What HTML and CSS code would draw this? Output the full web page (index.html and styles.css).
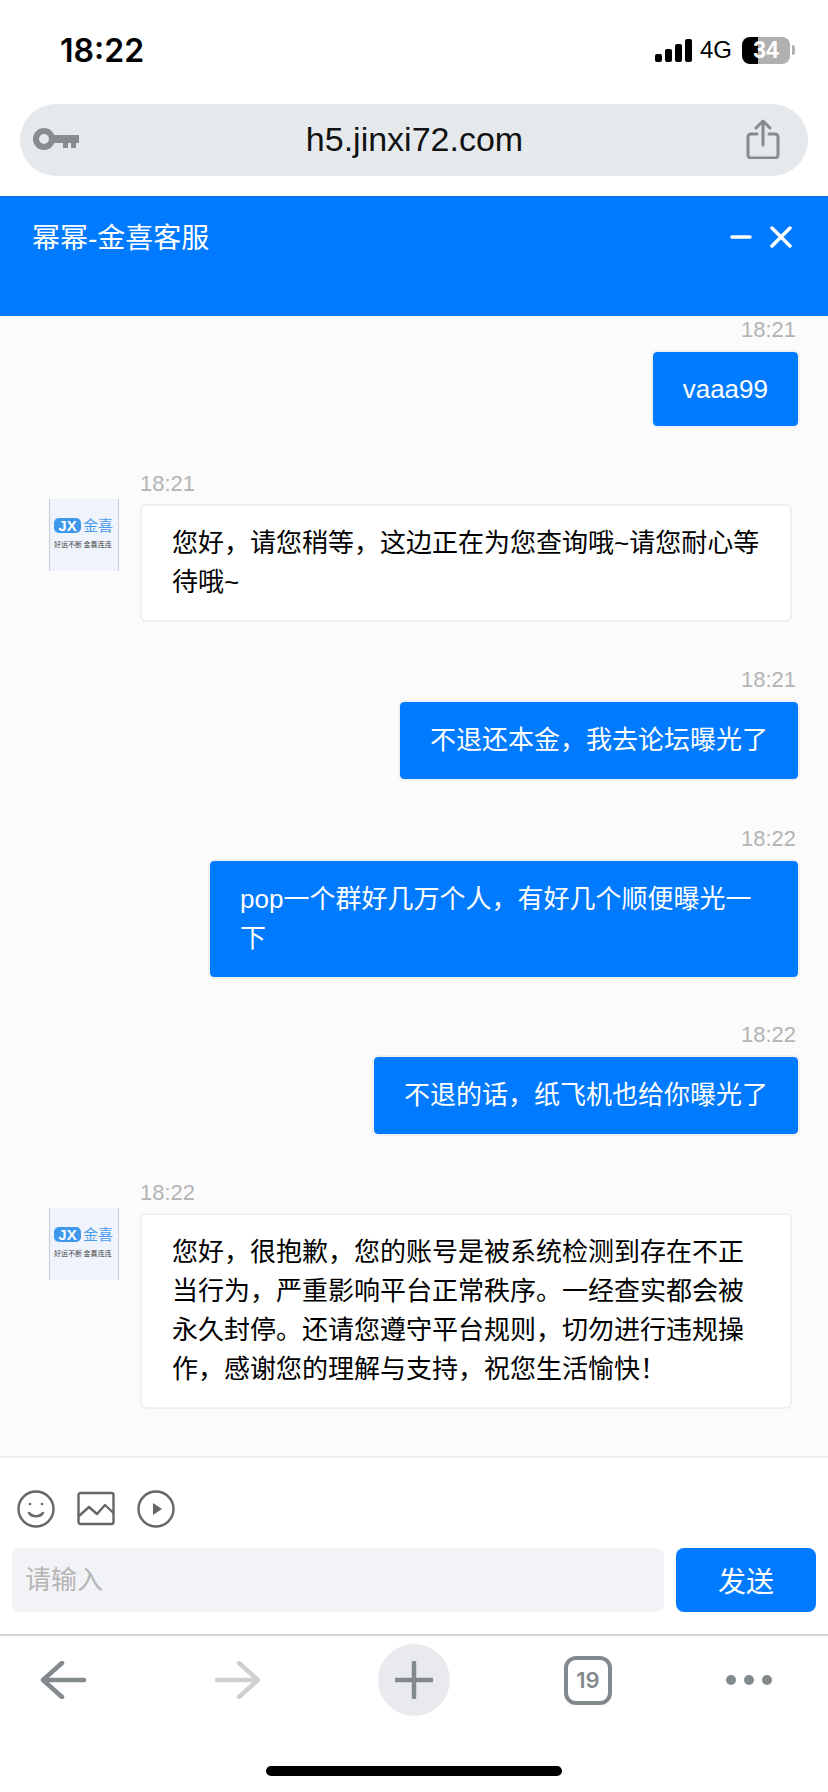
FILE: index.html
```html
<!DOCTYPE html>
<html lang="zh">
<head>
  <meta charset="UTF-8">
  <title>幂幂-金喜客服</title>
  <link rel="stylesheet" href="styles.css">
</head>
<body>
  <div class="status-bar">
    <span class="clock">18:22</span>
    <div class="status-icons">
      <div class="signal"><i></i><i></i><i></i><i></i></div>
      <span class="net">4G</span>
      <div class="battery">34</div>
      <div class="battery-nub"></div>
    </div>
  </div>

  <div class="url-bar">
    <svg class="key" width="46" height="22" viewBox="0 0 46 22">
      <circle cx="11" cy="11" r="8" fill="none" stroke="#868c90" stroke-width="6"/>
      <path d="M18 7h28v8h-3v5h-5v-5h-3v5h-5v-5H18z" fill="#868c90"/>
    </svg>
    <span class="url">h5.jinxi72.com</span>
    <svg class="share" width="34" height="40" viewBox="0 0 34 40" fill="none" stroke="#848b90" stroke-width="3" stroke-linecap="round" stroke-linejoin="round">
      <path d="M11 15H5a3 3 0 0 0-3 3v18a3 3 0 0 0 3 3h24a3 3 0 0 0 3-3V18a3 3 0 0 0-3-3h-6"/>
      <path d="M17 26V3M10 9l7-7 7 7"/>
    </svg>
  </div>

  <div class="chat-header">
    <span class="chat-title">幂幂-金喜客服</span>
    <div class="chat-actions">
      <svg width="22" height="22" viewBox="0 0 22 22"><path d="M2 11h18" stroke="#fff" stroke-width="3.500" stroke-linecap="round"/></svg>
      <svg width="22" height="22" viewBox="0 0 22 22"><path d="M2 2l18 18M20 2L2 20" stroke="#fff" stroke-width="3.500" stroke-linecap="round"/></svg>
    </div>
  </div>

  <div class="messages">
    <div class="msg msg-me first">
      <div class="msg-time">18:21</div>
      <div class="bubble latin">vaaa99</div>
    </div>

    <div class="msg msg-agent gap-sm">
      <div class="avatar">
        <div class="logo-row"><span class="logo-jx">JX</span><span class="logo-name">金喜</span></div>
        <div class="logo-slogan">好运不断 金喜连连</div>
      </div>
      <div class="msg-body">
        <div class="msg-time">18:21</div>
        <div class="bubble">您好，请您稍等，这边正在为您查询哦~请您耐心等待哦~</div>
      </div>
    </div>

    <div class="msg msg-me">
      <div class="msg-time">18:21</div>
      <div class="bubble">不退还本金，我去论坛曝光了</div>
    </div>

    <div class="msg msg-me">
      <div class="msg-time">18:22</div>
      <div class="bubble">pop一个群好几万个人，有好几个顺便曝光一下</div>
    </div>

    <div class="msg msg-me gap-sm">
      <div class="msg-time">18:22</div>
      <div class="bubble">不退的话，纸飞机也给你曝光了</div>
    </div>

    <div class="msg msg-agent">
      <div class="avatar">
        <div class="logo-row"><span class="logo-jx">JX</span><span class="logo-name">金喜</span></div>
        <div class="logo-slogan">好运不断 金喜连连</div>
      </div>
      <div class="msg-body">
        <div class="msg-time">18:22</div>
        <div class="bubble">您好，很抱歉，您的账号是被系统检测到存在不正当行为，严重影响平台正常秩序。一经查实都会被永久封停。还请您遵守平台规则，切勿进行违规操作，感谢您的理解与支持，祝您生活愉快！</div>
      </div>
    </div>
  </div>

  <div class="composer">
    <div class="composer-tools">
      <svg width="38" height="38" viewBox="0 0 38 38" fill="none" stroke="#666" stroke-width="2.400" stroke-linecap="round">
        <circle cx="19" cy="19" r="17.500"/>
        <path d="M12 23c3.500 4.500 10.500 4.500 14 0"/>
        <circle cx="13" cy="14" r="1.300" fill="#666" stroke="none"/>
        <circle cx="25" cy="14" r="1.300" fill="#666" stroke="none"/>
      </svg>
      <svg width="38" height="38" viewBox="0 0 38 38" fill="none" stroke="#666" stroke-width="2.400" stroke-linejoin="round">
        <rect x="1.500" y="3" width="35" height="31" rx="2"/>
        <path d="M2 26l10-9 8 7 8-9 8.500 8"/>
      </svg>
      <svg width="38" height="38" viewBox="0 0 38 38" fill="none" stroke="#666" stroke-width="2.400">
        <circle cx="19" cy="19" r="17.500"/>
        <path d="M16 13l9 6-9 6z" fill="#666" stroke="none"/>
      </svg>
    </div>
    <div class="composer-row">
      <input class="composer-input" type="text" placeholder="请输入">
      <button class="send-btn">发送</button>
    </div>
  </div>

  <div class="toolbar">
    <svg width="46" height="38" viewBox="0 0 46 38" fill="none" stroke="#838a8e" stroke-width="4.500" stroke-linecap="round" stroke-linejoin="round">
      <path d="M44 19H3M22 2L3 19l19 17"/>
    </svg>
    <svg width="46" height="38" viewBox="0 0 46 38" fill="none" stroke="#cfcfcf" stroke-width="4.500" stroke-linecap="round" stroke-linejoin="round">
      <path d="M2 19h41M24 2l19 17-19 17"/>
    </svg>
    <div class="new-tab">
      <svg width="38" height="38" viewBox="0 0 38 38" stroke="#838a8e" stroke-width="4.500" stroke-linecap="round">
        <path d="M1 19h36M19 2v34"/>
      </svg>
    </div>
    <div class="tab-count">19</div>
    <div class="more"><i></i><i></i><i></i></div>
  </div>
  <div class="home-bar"></div>
</body>
</html>
```

FILE: styles.css
```css
* {
  box-sizing: border-box;
}
body {
  margin: 0;
  width: 828px;
  height: 1792px;
  overflow: hidden;
  background-color: #fff;
  color: #000;
  font-family: "Liberation Sans", "Noto Sans CJK SC", sans-serif;
}

/* status bar */
.status-bar {
  display: flex;
  align-items: center;
  justify-content: space-between;
  height: 104px;
  padding: 0 33px 4px 60px;
}
.clock {
  font-family: Inter, sans-serif;
  font-size: 32px;
  font-weight: 600;
}
.status-icons {
  display: flex;
  align-items: center;
}
.signal {
  display: flex;
  align-items: flex-end;
  gap: 3px;
  height: 23px;
  margin-right: 8px;
}
.signal i {
  width: 7px;
  background-color: #000;
  border-radius: 2px;
}
.signal i:nth-child(1) { height: 8px; }
.signal i:nth-child(2) { height: 13px; }
.signal i:nth-child(3) { height: 18px; }
.signal i:nth-child(4) { height: 23px; }
.net {
  font-size: 24px;
  margin-right: 10px;
}
.battery {
  width: 48px;
  height: 27px;
  border-radius: 8px;
  background: linear-gradient(to right, #000 34%, #b0b0b0 34%);
  color: #fff;
  font-size: 23px;
  font-weight: bold;
  line-height: 27px;
  text-align: center;
}
.battery-nub {
  width: 3px;
  height: 10px;
  margin-left: 2px;
  background-color: #b0b0b0;
  border-radius: 0 3px 3px 0;
}

/* address bar */
.url-bar {
  display: flex;
  align-items: center;
  justify-content: space-between;
  height: 72px;
  margin: 0 20px;
  padding: 0 28px 2px 13px;
  background-color: #e6e9ec;
  border-radius: 36px;
}
.url {
  margin-left: 4px;
  font-size: 34px;
  color: #111;
}

/* chat */
.chat-header {
  display: flex;
  justify-content: space-between;
  height: 120px;
  margin-top: 20px;
  padding: 22px 36px 0 32px;
  border-top: 1px solid #0a6fd8;
  background-color: #007aff;
  color: #fff;
}
.chat-title {
  font-size: 28px;
  line-height: 40px;
}
.chat-actions {
  display: flex;
  gap: 18px;
  padding-top: 7px;
}
.messages {
  height: 1140px;
  padding: 0 28px 0 49px;
  background-color: #fbfbfb;
  overflow: hidden;
}
.msg {
  margin-top: 46px;
}
.msg.first {
  margin-top: 2px;
}
.msg.gap-sm {
  margin-top: 44px;
}
.msg-me + .msg-agent:not(.gap-sm) {
  margin-top: 45px;
}
.msg-time {
  height: 24px;
  margin-bottom: 8px;
  color: #b4b4b4;
  font-size: 22px;
  line-height: 24px;
}
.msg-me {
  display: flex;
  flex-direction: column;
  align-items: flex-end;
}
.msg-me .msg-time {
  margin-right: 4px;
}
.msg-agent {
  display: flex;
  align-items: flex-start;
  gap: 21px;
  margin-right: 8px;
}
.msg-body {
  flex: 1;
}
.bubble {
  padding: 18px 28px 18px 30px;
  border: 2px solid #f0f0f0;
  border-radius: 6px;
  background-color: #fff;
  font-size: 26px;
  line-height: 39px;
}
.msg-me .bubble {
  max-width: 592px;
  padding: 19px 30px;
  background-color: #007aff;
  background-clip: padding-box;
  color: #fff;
}
.msg-me .bubble.latin {
  padding: 18px 30px;
  line-height: 38px;
}

/* avatar logo */
.avatar {
  flex: none;
  width: 70px;
  height: 72px;
  margin-top: 27px;
  padding: 19px 0 0 4px;
  background-color: #eff3fb;
  border-left: 1px solid #c8ccd4;
  border-right: 1px solid #c8ccd4;
}
.logo-row {
  display: flex;
  align-items: center;
  gap: 2px;
}
.logo-jx {
  width: 27px;
  height: 15px;
  background-color: #3f97ec;
  border-radius: 5px;
  color: #fff;
  font-size: 15px;
  font-weight: bold;
  line-height: 15px;
  text-align: center;
}
.logo-name {
  color: #4a9bec;
  font-size: 15px;
  line-height: 15px;
}
.logo-slogan {
  margin-top: 6px;
  color: #444;
  font-family: "Noto Sans CJK SC", serif;
  font-size: 7px;
  line-height: 10px;
  white-space: nowrap;
}

/* input area */
.composer {
  height: 180px;
  padding: 32px 12px 0;
  border-top: 2px solid #eee;
  border-bottom: 2px solid #d4d4d4;
}
.composer-tools {
  display: flex;
  gap: 22px;
  padding-left: 5px;
}
.composer-row {
  display: flex;
  gap: 12px;
  margin-top: 20px;
}
.composer-input {
  flex: 1;
  height: 64px;
  padding: 0 13px;
  border: none;
  border-radius: 8px;
  background-color: #f2f3f7;
  font-family: inherit;
  font-size: 26px;
}
.composer-input::placeholder {
  color: #b5b5b5;
}
.send-btn {
  width: 140px;
  height: 64px;
  border: none;
  border-radius: 8px;
  background-color: #007aff;
  color: #fff;
  font-family: inherit;
  font-size: 28px;
}

/* browser toolbar */
.toolbar {
  display: grid;
  grid-template-columns: 126px 224px 128px 220px 102px;
  justify-items: center;
  align-items: center;
  height: 88px;
}
.new-tab {
  display: flex;
  align-items: center;
  justify-content: center;
  width: 72px;
  height: 72px;
  background-color: #e9eaee;
  border-radius: 50%;
}
.tab-count {
  width: 48px;
  height: 49px;
  border: 4px solid #838a8e;
  border-radius: 12px;
  color: #838a8e;
  font-family: Inter, sans-serif;
  font-size: 22px;
  font-weight: 600;
  line-height: 41px;
  text-align: center;
}
.more {
  display: flex;
  gap: 8px;
}
.more i {
  width: 10px;
  height: 10px;
  background-color: #838a8e;
  border-radius: 50%;
}
.home-bar {
  width: 296px;
  height: 10px;
  margin: 42px auto 0;
  background-color: #000;
  border-radius: 5px;
}
```
